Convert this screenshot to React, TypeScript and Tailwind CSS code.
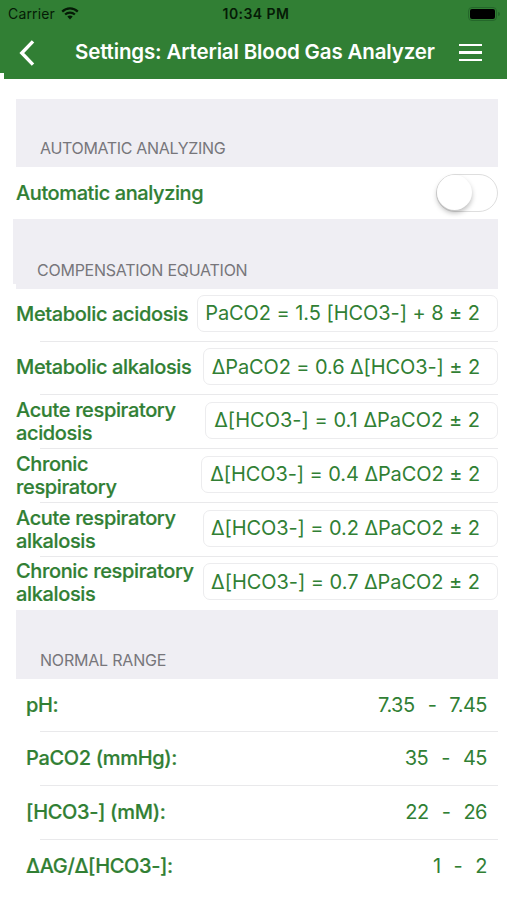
interface Equation {
  label: string[];
  value: string;
  rowClass: string;
  fieldClass: string;
}

interface Range {
  label: string;
  low: string;
  high: string;
  rowClass: string;
}

const equations: Equation[] = [
  { label: ['Metabolic acidosis'], value: 'PaCO2 = 1.5 [HCO3-] + 8 ± 2', rowClass: 'h-[53px] pt-1.5', fieldClass: 'w-[301px] pb-px tracking-[-0.06px]' },
  { label: ['Metabolic alkalosis'], value: 'ΔPaCO2 = 0.6 Δ[HCO3-] ± 2', rowClass: 'h-[53px] pt-1.5', fieldClass: 'w-[295px] tracking-[-0.1px]' },
  { label: ['Acute respiratory', 'acidosis'], value: 'Δ[HCO3-] = 0.1 ΔPaCO2 ± 2', rowClass: 'h-[54px] pt-[7px]', fieldClass: 'w-[293px] pb-px tracking-[0.02px]' },
  { label: ['Chronic', 'respiratory'], value: 'Δ[HCO3-] = 0.4 ΔPaCO2 ± 2', rowClass: 'h-[54px] pt-[7px]', fieldClass: 'w-[297px] pb-px tracking-[-0.08px]' },
  { label: ['Acute respiratory', 'alkalosis'], value: 'Δ[HCO3-] = 0.2 ΔPaCO2 ± 2', rowClass: 'h-[54px] pt-[7px]', fieldClass: 'w-[295px] pb-px tracking-[-0.08px]' },
  { label: ['Chronic respiratory', 'alkalosis'], value: 'Δ[HCO3-] = 0.7 ΔPaCO2 ± 2', rowClass: 'h-[53px] pt-1.5', fieldClass: 'w-[295px] tracking-[-0.04px]' },
];

const ranges: Range[] = [
  { label: 'pH:', low: '7.35', high: '7.45', rowClass: 'h-[53px]' },
  { label: 'PaCO2 (mmHg):', low: '35', high: '45', rowClass: 'h-[54px]' },
  { label: '[HCO3-] (mM):', low: '22', high: '26', rowClass: 'h-[54px]' },
  { label: 'ΔAG/Δ[HCO3-]:', low: '1', high: '2', rowClass: 'h-[54px]' },
];

function WifiIcon() {
  return (
    <svg width="18" height="13" viewBox="0 0 18 13" fill="none" stroke="currentColor" strokeWidth="2.2">
      <path d="M1.2 4.6 C5.5 0.3 12.5 0.3 16.8 4.6" />
      <path d="M4.1 7.5 C6.9 4.9 11.1 4.9 13.9 7.5" />
      <path d="M9 12.4 L6.3 9.5 C7.8 8.1 10.2 8.1 11.7 9.5 Z" fill="currentColor" stroke="none" />
    </svg>
  );
}

function StatusBar() {
  return (
    <div className="grid h-[27px] grid-cols-3 items-center pl-2 pr-[7px] text-[#051b06]">
      <div className="flex items-center gap-[6px]">
        <span className="text-[14px] tracking-[0.15px]">Carrier</span>
        <WifiIcon />
      </div>
      <span className="pl-[4px] text-center text-[14px] font-semibold tracking-[0.45px]">10:34 PM</span>
      <div className="flex items-center justify-end gap-px">
        <div className="h-[14px] w-[29px] rounded-[4px] border border-[#24672a] p-px">
          <div className="h-full rounded-[2px] bg-black" />
        </div>
        <div className="h-1 w-[2px] rounded-r bg-[#24672a]" />
      </div>
    </div>
  );
}

function NavBar() {
  return (
    <div className="flex h-[52px] items-center pb-px pl-[18px] pr-[25px] text-white">
      <svg width="18" height="28" viewBox="0 0 18 28" fill="none" stroke="currentColor" strokeWidth="3.4">
        <path d="M15 2.4 L3.8 14 L15 25.6" />
      </svg>
      <h1 className="ml-[39px] text-[20.5px] font-semibold tracking-[-0.15px] whitespace-nowrap">Settings: Arterial Blood Gas Analyzer</h1>
      <div className="ml-auto flex w-[23px] flex-col gap-[5px]">
        <span className="h-[2.5px] bg-white" />
        <span className="h-[2.5px] bg-white" />
        <span className="h-[2.5px] bg-white" />
      </div>
    </div>
  );
}

function SectionHeader({ title, className }: { title: string; className?: string }) {
  return (
    <div className={`relative flex items-end bg-[#efeef3] pb-2 text-[16px] leading-[22px] text-[#77767b] ${className}`}>
      {title}
    </div>
  );
}

function Separator() {
  return <div className="absolute right-0 bottom-0 left-6 h-px bg-[#e9e9eb]" />;
}

export default function App() {
  return (
    <div className="h-[900px] w-[507px] overflow-hidden bg-white font-['Inter',sans-serif] text-[#317f34]">
      <header className="relative h-[79px] bg-[#317f34]">
        <StatusBar />
        <NavBar />
        <div className="absolute bottom-0 left-0 h-[6px] w-[4px] bg-white" />
      </header>

      <main className="pt-5 pr-[9px] pl-4">
        <SectionHeader title="AUTOMATIC ANALYZING" className="h-[68px] pl-6 tracking-[-0.33px]" />
        <div className="flex h-[52px] items-center justify-between">
          <span className="text-[20px] font-medium tracking-[-0.4px] [-webkit-text-stroke:0.2px]">Automatic analyzing</span>
          <div className="h-[38px] w-[62px] rounded-full border border-[#dedede] bg-white">
            <div className="h-[35px] w-[35px] rounded-full bg-white shadow-[0_3px_5px_rgba(0,0,0,0.25)]" />
          </div>
        </div>

        <div className="relative -ml-[3px]">
          <SectionHeader title="COMPENSATION EQUATION" className="h-[70px] pl-[24px] tracking-[-0.25px]" />
          <div className="absolute bottom-0 left-0 h-[5px] w-[3px] bg-white" />
        </div>
        {equations.map((eq, i) => (
          <div key={eq.label.join(' ')} className={`relative flex justify-between ${eq.rowClass}`}>
            <div className="flex h-[39px] flex-col justify-center text-[20px] leading-[23px] font-medium tracking-[-0.36px] whitespace-nowrap [-webkit-text-stroke:0.2px]">
              {eq.label.map((line) => (
                <span key={line}>{line}</span>
              ))}
            </div>
            <div className={`flex h-[37px] items-center justify-end rounded-[7px] border border-[#ececee] pr-[17px] text-[20px] whitespace-nowrap ${eq.fieldClass}`}>
              {eq.value}
            </div>
            {i < equations.length - 1 && <Separator />}
          </div>
        ))}

        <SectionHeader title="NORMAL RANGE" className="h-[69px] pl-6 tracking-[-0.2px]" />
        {ranges.map((range, i) => (
          <div key={range.label} className={`relative flex items-center justify-between pr-[11px] pb-[2px] pl-[10px] text-[20px] ${range.rowClass}`}>
            <span className="font-medium tracking-[-0.35px] [-webkit-text-stroke:0.2px]">{range.label}</span>
            <div className="flex gap-[13px] tracking-[-0.5px]">
              <span>{range.low}</span>
              <span>-</span>
              <span>{range.high}</span>
            </div>
            {i < ranges.length - 1 && <Separator />}
          </div>
        ))}
      </main>
    </div>
  );
}
